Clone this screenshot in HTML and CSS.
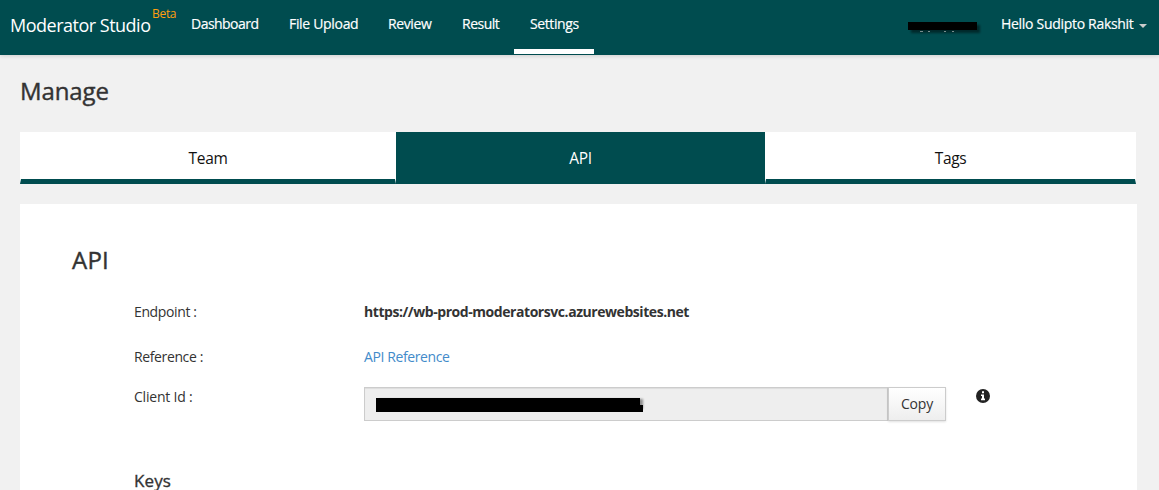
FILE: index.html
```html
<!DOCTYPE html>
<html lang="en">
<head>
<meta charset="utf-8">
<title>Moderator Studio</title>
<link rel="stylesheet" href="styles.css">
</head>
<body>
<header class="navbar">
  <a class="brand">Moderator Studio</a>
  <span class="beta">Beta</span>
  <nav class="menu">
    <a class="menu-item dashboard">Dashboard</a>
    <a class="menu-item upload">File Upload</a>
    <a class="menu-item review">Review</a>
    <a class="menu-item result">Result</a>
    <a class="menu-item settings active">Settings</a>
  </nav>
  <div class="account">
    <svg class="team-mask" width="76" height="16" viewBox="0 0 76 16">
      <path class="mask-shadow" d="M3 3h69v8H3z"/>
      <path d="M0 0h69v8H0z"/>
      <path class="descenders" d="M12 9.5h3M20 9.5h2M36 9.5h2M44 9.5h2"/>
    </svg>
    <a class="user">Hello Sudipto Rakshit</a>
    <span class="caret"></span>
  </div>
</header>
<main class="page">
  <h1 class="page-title">Manage</h1>
  <div class="tabs">
    <a class="tab team">Team</a>
    <a class="tab api selected">API</a>
    <a class="tab tags">Tags</a>
  </div>
  <section class="panel">
    <h2 class="panel-title">API</h2>
    <dl class="fields">
      <dt class="endpoint-label">Endpoint :</dt>
      <dd class="endpoint">https://wb-prod-moderatorsvc.azurewebsites.net</dd>
      <dt class="reference-label">Reference :</dt>
      <dd><a class="link">API Reference</a></dd>
      <dt class="client-label">Client Id :</dt>
      <dd class="client">
        <div class="input"><svg class="id-mask" width="270" height="16" viewBox="0 0 270 16"><path class="id-shadow" d="M3 2h264v10H3z"/><path d="M0 1h264v7h3v7H0z"/></svg></div>
        <button class="copy"><span>Copy</span></button>
        <svg class="info" width="14" height="14" viewBox="0 0 14 14"><circle cx="7" cy="7" r="7"/><path class="info-i" d="M6 2.3h2v2H6zM5 5.6h3v4h1v1.6H5V9.6h1V7H5z"/></svg>
      </dd>
    </dl>
    <h3 class="keys">Keys</h3>
  </section>
</main>
</body>
</html>
```
FILE: styles.css
```css
* { box-sizing: border-box; }
body {
  margin: 0;
  height: 490px;
  overflow: hidden;
  background: #f1f1f1;
  color: #333;
  font: 14px/20px "Open Sans", "Noto Sans", sans-serif;
}
h1, h2, h3, dl, dd { margin: 0; }
a, .beta, .endpoint, dt, h1, h2, h3 { white-space: nowrap; }
.navbar {
  display: flex;
  height: 55px;
  padding-left: 10px;
  background: #004c4f;
  color: #fff;
  box-shadow: 0 1px 4px rgba(0, 0, 0, .15);
}
.brand { width: 142px; padding-top: 15px; font-size: 18px; letter-spacing: -.5px; }
.beta { width: 24px; padding-top: 4px; color: #ff9f0f; font-size: 12px; letter-spacing: -.3px; }
.menu { display: flex; height: 54px; }
.menu-item { padding: 14px 0 0 15px; -webkit-text-stroke: .18px; letter-spacing: -.4px; }
.dashboard { width: 98px; letter-spacing: -.53px; }
.upload { width: 99px; letter-spacing: -.32px; }
.review { width: 74px; }
.result { width: 67px; letter-spacing: -.5px; }
.settings { width: 80px; padding-left: 16px; }
.active { border-bottom: 5px solid #fff; }
.account { display: flex; margin-left: auto; width: 251px; }
.team-mask { width: 76px; margin: 22px 17px 0 0; }
.mask-shadow { fill: #000; opacity: .45; filter: blur(1px); }
.descenders { stroke: #7a8d8d; stroke-width: 1; }
.user { width: 138px; padding-top: 14px; -webkit-text-stroke: .18px; letter-spacing: -.3px; }
.caret { width: 8px; height: 4px; margin-top: 24px; border: 4px solid transparent; border-top-color: #ccc; border-bottom: 0; }
.page { padding: 23px 22px 0 20px; }
.page-title { height: 54px; font-size: 24px; line-height: 26px; font-weight: 400; -webkit-text-stroke: .4px; letter-spacing: -.1px; }
.tabs { display: flex; width: 1116px; height: 52px; }
.tab {
  padding-top: 16px;
  border: 1px solid #fff;
  border-top: 0;
  border-bottom: 5px solid #004c4f;
  background: #fff;
  color: #111;
  font-size: 15.5px;
  letter-spacing: -.35px;
  text-align: center;
}
.team { width: 376px; }
.api { width: 369px; }
.tags { width: 371px; }
.selected { border-color: #004c4f; background: #004c4f; color: #fff; }
.panel { height: 300px; margin-top: 20px; padding: 43px 0 0 52px; background: #fff; }
.panel-title { height: 51px; font-size: 24px; line-height: 26px; font-weight: 400; -webkit-text-stroke: .4px; letter-spacing: .2px; }
.fields { display: grid; grid-template-columns: 230px 1fr; grid-template-rows: 45px 41px 80px; margin-left: 62px; padding-top: 4px; }
.fields dt { letter-spacing: -.38px; }
.fields .client-label { margin-top: -1px; letter-spacing: -.2px; }
.endpoint { font-weight: 700; letter-spacing: -.44px; }
.link { color: #428bca; letter-spacing: -.4px; }
.client { display: flex; margin-top: -1px; }
.input { width: 524px; height: 34px; padding: 9px 0 0 11px; border: 1px solid #ccc; background: #eee; box-shadow: inset 0 1px 1px rgba(0, 0, 0, .075); }
.id-mask { display: block; }
.id-shadow { opacity: .4; filter: blur(1px); }
.copy { width: 58px; height: 34px; padding: 0; border: 1px solid #ccc; background: linear-gradient(#fff, #eee); box-shadow: 0 1px 2px rgba(0, 0, 0, .12); color: #333; font: 14px/20px "Open Sans", sans-serif; letter-spacing: -.2px; }
.info { margin: 2px 0 0 30px; fill: #222; }
.info-i { fill: #fff; }
.keys { margin-left: 62px; padding-top: 1px; font-size: 17px; line-height: 24px; font-weight: 400; letter-spacing: .1px; -webkit-text-stroke: .35px; }
```
